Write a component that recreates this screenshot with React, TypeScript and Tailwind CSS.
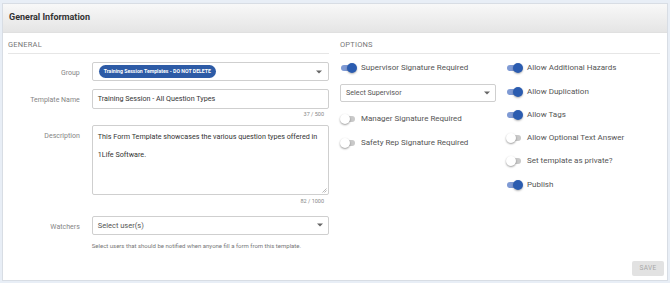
import React from "react";

function Toggle({ on }: { on: boolean }) {
  return (
    <div className="relative w-[17px] h-[10px] shrink-0">
      <div
        className={
          on
            ? "absolute left-[1px] top-[2px] h-[6px] w-[14px] rounded-full bg-[#7f9ad4]"
            : "absolute left-[2px] top-[2px] h-[6px] w-[13px] rounded-full bg-[#c9c9c9]"
        }
      />
      <div
        className={
          on
            ? "absolute left-[7px] top-0 h-[10px] w-[10px] rounded-full bg-[#2b5cb0] shadow-[0_1px_2px_rgba(0,0,0,0.3)]"
            : "absolute left-0 top-0 h-[10px] w-[10px] rounded-full bg-white shadow-[0_1px_2px_rgba(0,0,0,0.4)]"
        }
      />
    </div>
  );
}

function Option({ on, label }: { on: boolean; label: string }) {
  return (
    <div className="flex items-center gap-[4px] h-[12px]">
      <Toggle on={on} />
      <span className="text-[8px] text-[#555]">{label}</span>
    </div>
  );
}

function Caret() {
  return (
    <svg width="6" height="4" viewBox="0 0 6 4" className="shrink-0">
      <path d="M0 0.5 L6 0.5 L3 3.5 Z" fill="#666" />
    </svg>
  );
}

function Row({ label, children }: { label: string; children: React.ReactNode }) {
  return (
    <div className="flex">
      <div className="w-[72px] text-right text-[7px] text-[#858585] pt-[6px]">{label}</div>
      <div className="ml-[12px] w-[238px]">{children}</div>
    </div>
  );
}

export default function App() {
  return (
    <div
      className="w-[670px] h-[283px] bg-[#e8eef6] pt-[3px] px-[2px] pb-[2px]"
      style={{ fontFamily: "Roboto, 'Liberation Sans', sans-serif" }}
    >
      <div className="h-full bg-white border border-[#d8dde4] flex flex-col">
        <div className="h-[29px] shrink-0 bg-gradient-to-b from-[#f8f8f8] to-[#e5e5e5] border-b border-[#e0e0e0] px-[6px] flex items-center">
          <span className="text-[9px] font-bold text-[#333]">General Information</span>
        </div>

        <div className="flex-1 flex px-[5px] pt-[6px] relative">
          {/* Left column */}
          <div className="w-[321px]">
            <div className="text-[7.5px] text-[#777] tracking-[0.2px] pb-[3px] border-b border-[#e6e6e6]">
              GENERAL
            </div>

            <div className="mt-[8px]">
              <Row label="Group">
                <div className="h-[19px] border border-[#cfcfcf] rounded-[2px] flex items-center px-[6px]">
                  <span className="h-[13px] px-[5px] rounded-full bg-[#2d5ba6] text-white text-[5.2px] font-bold flex items-center">
                    Training Session Templates - DO NOT DELETE
                  </span>
                  <div className="flex-1" />
                  <Caret />
                </div>
              </Row>
            </div>

            <div className="mt-[8px]">
              <Row label="Template Name">
                <div className="h-[20px] border border-[#cfcfcf] rounded-[2px] flex items-center px-[5px] text-[7.2px] text-[#333]">
                  Training Session - All Question Types
                </div>
                <div className="text-right text-[5.5px] text-[#888] mt-[1px] pr-[5px]">37 / 500</div>
              </Row>
            </div>

            <div className="mt-[6px]">
              <Row label="Description">
                <div className="relative h-[70px] border border-[#cfcfcf] rounded-[2px] px-[5px] pt-[2px] text-[7.2px] leading-[18px] text-[#333]">
                  This Form Template showcases the various question types offered in 1Life Software.
                  <svg width="5" height="5" viewBox="0 0 5 5" className="absolute right-[1px] bottom-[1px]">
                    <path d="M4.5 0.5 L0.5 4.5 M4.5 2.5 L2.5 4.5" stroke="#999" strokeWidth="0.7" />
                  </svg>
                </div>
                <div className="text-right text-[5.5px] text-[#888] mt-[2px] pr-[5px]">82 / 1000</div>
              </Row>
            </div>

            <div className="mt-[11px]">
              <Row label="Watchers">
                <div className="h-[19px] border border-[#cfcfcf] rounded-[2px] flex items-center px-[5px] text-[7.5px] text-[#555]">
                  <span>Select user(s)</span>
                  <div className="flex-1" />
                  <Caret />
                </div>
                <div className="text-[6px] text-[#777] mt-[6px]">
                  Select users that should be notified when anyone fill a form from this template.
                </div>
              </Row>
            </div>
          </div>

          {/* Right column */}
          <div className="w-[320px] ml-[11px]">
            <div className="text-[7.5px] text-[#777] tracking-[0.2px] pb-[3px] border-b border-[#e6e6e6]">
              OPTIONS
            </div>
            <div className="flex mt-[8px]">
              <div className="w-[156px]">
                <Option on label="Supervisor Signature Required" />
                <div className="mt-[10px] h-[18px] border border-[#cfcfcf] rounded-[2px] flex items-center px-[5px] text-[7.2px] text-[#555]">
                  <span>Select Supervisor</span>
                  <div className="flex-1" />
                  <Caret />
                </div>
                <div className="mt-[11px]">
                  <Option on={false} label="Manager Signature Required" />
                </div>
                <div className="mt-[12px]">
                  <Option on={false} label="Safety Rep Signature Required" />
                </div>
              </div>
              <div className="ml-[10px] flex flex-col gap-[11.3px]">
                <Option on label="Allow Additional Hazards" />
                <Option on label="Allow Duplication" />
                <Option on label="Allow Tags" />
                <Option on={false} label="Allow Optional Text Answer" />
                <Option on={false} label="Set template as private?" />
                <Option on label="Publish" />
              </div>
            </div>
          </div>

          <div className="absolute right-[3px] bottom-[4px] w-[32px] h-[15px] rounded-[2px] bg-[#e2e2e2] flex items-center justify-center text-[6.5px] text-[#a8a8a8] tracking-[0.3px]">
            SAVE
          </div>
        </div>
      </div>
    </div>
  );
}
